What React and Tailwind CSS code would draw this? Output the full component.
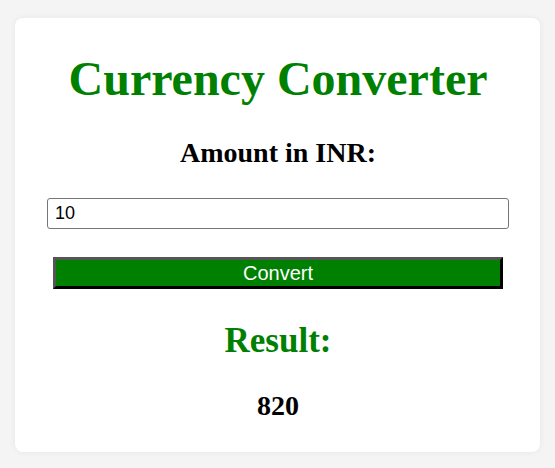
import React, { useState } from 'react';

const serif = { fontFamily: '"Liberation Serif", "Times New Roman", serif' };

const App = () => {
  const [amount, setAmount] = useState('10');
  const [result, setResult] = useState(820);

  const convert = () => setResult(Math.round(parseFloat(amount || 0) * 82 * 100) / 100);

  return (
    <div className="min-h-screen bg-[#f4f4f4] pt-[18px] pl-[15px] pr-[15px]">
      <div
        className="flex flex-col bg-white rounded-lg pt-[37px] pb-[32px] pl-8 pr-[31px] shadow-[0_0_6px_rgba(0,0,0,0.06)]"
        style={serif}
      >
        <h1 className="text-center text-[48px] leading-none font-bold text-[#008000]">Currency Converter</h1>

        <h2 className="mt-[36px] text-center text-[28px] leading-none font-bold text-black">Amount in INR:</h2>

        <input
          type="text"
          value={amount}
          onChange={(e) => setAmount(e.target.value)}
          className="mt-[31px] h-[31px] w-full border border-[#767676] rounded-[3px] px-[7px] text-[18px] text-black outline-none font-['Liberation_Sans',Arial,sans-serif]"
        />

        <button
          onClick={convert}
          className="mt-[28px] self-center w-[450px] h-[32px] bg-[#008000] text-white text-[20px] leading-none border-[3px] border-t-[#555555] border-l-[#555555] border-b-black border-r-black font-['Liberation_Sans',Arial,sans-serif]"
        >
          Convert
        </button>

        <h2 className="mt-[34px] text-center text-[35px] leading-none font-bold text-[#008000]">Result:</h2>

        <p className="mt-[34px] text-center text-[28px] leading-none font-bold text-black">{result}</p>
      </div>
    </div>
  );
};

export default App;
